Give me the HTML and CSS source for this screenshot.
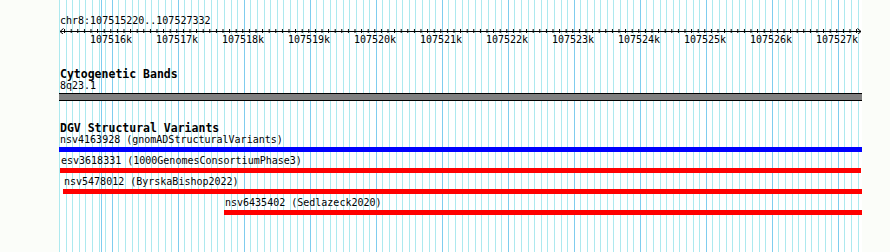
FILE: index.html
```html
<!DOCTYPE html>
<html lang="en">
<head>
    <meta charset="UTF-8">
    <title>chr8:107515220..107527332</title>
    <link rel="stylesheet" href="styles.css">
</head>
<body>
    <div class="view">
        <div class="ruler">
            <div class="ruler-title">chr8:107515220..107527332</div>
            <svg class="ruler-axis" width="803" height="6" viewBox="0 0 803 6">
                <defs>
                    <pattern id="ticks" x="-1.5" y="0" width="6.6" height="6" patternUnits="userSpaceOnUse">
                        <rect x="0" y="0" width="1" height="5" fill="#000"/>
                    </pattern>
                </defs>
                <rect x="4" y="1" width="795" height="5" fill="url(#ticks)"/>
                <rect x="1" y="3" width="801" height="1" fill="#000"/>
                <path d="M4.5 0.5 L1 3.5 L4.5 6.5" fill="none" stroke="#000"/>
                <path d="M798.5 0.5 L802 3.5 L798.5 6.5" fill="none" stroke="#000"/>
            </svg>
            <div class="ruler-labels">
                <span>107516k</span><span>107517k</span><span>107518k</span><span>107519k</span>
                <span>107520k</span><span>107521k</span><span>107522k</span><span>107523k</span>
                <span>107524k</span><span>107525k</span><span>107526k</span><span>107527k</span>
            </div>
        </div>

        <div class="track track-bands">
            <h3 class="track-title">Cytogenetic Bands</h3>
            <div class="feature-label">8q23.1</div>
            <div class="band"></div>
        </div>

        <div class="track track-dgv">
            <h3 class="track-title">DGV Structural Variants</h3>
            <div class="feature" style="margin-left: 0px; width: 803px;">
                <div class="feature-label">nsv4163928 (gnomADStructuralVariants)</div>
                <div class="bar bar-blue"></div>
            </div>
            <div class="feature" style="margin-left: 1px; width: 801px;">
                <div class="feature-label">esv3618331 (1000GenomesConsortiumPhase3)</div>
                <div class="bar bar-red"></div>
            </div>
            <div class="feature" style="margin-left: 4px; width: 799px;">
                <div class="feature-label">nsv5478012 (ByrskaBishop2022)</div>
                <div class="bar bar-red"></div>
            </div>
            <div class="feature" style="margin-left: 165px; width: 638px;">
                <div class="feature-label">nsv6435402 (Sedlazeck2020)</div>
                <div class="bar bar-red"></div>
            </div>
        </div>
    </div>
</body>
</html>
```

FILE: styles.css
```css
body { margin: 0; background: #fbfdf9; font-family: "DejaVu Sans Mono", "Liberation Mono", monospace; font-size: 10px; color: #000; }
.view {
    margin-left: 59px; width: 803px; height: 252px; overflow: hidden;
    background-color: #fff;
    background-image:
        repeating-linear-gradient(90deg, #7fcdee 0 1px, transparent 1px 66px),
        repeating-linear-gradient(90deg, #ade9ef 0 1px, transparent 1px 6.6px);
    background-position: 53px 0, 0 0;
}
.ruler { padding-top: 15px; }
.ruler-title { line-height: 12px; padding-left: 1px; }
.ruler-axis { display: block; margin-top: 1px; }
.ruler-labels { display: flex; line-height: 12px; padding-left: 19px; }
.ruler-labels span { width: 66px; flex: none; text-align: center; }
.track-title { margin: 0; font-size: 11.5px; font-weight: bold; line-height: 12px; padding-left: 1px; }
.feature-label { line-height: 12px; padding-left: 1px; white-space: nowrap; }
.track-bands { margin-top: 22px; }
.band { margin-top: 1px; height: 6px; background: #808080; border-top: 1px solid #000; border-bottom: 1px solid #000; }
.track-dgv { margin-top: 21px; }
.feature { margin-bottom: 3px; }
.bar { margin-top: 1px; height: 5px; }
.bar-blue { background: #0000ff; }
.bar-red { background: #ff0000; }
```
